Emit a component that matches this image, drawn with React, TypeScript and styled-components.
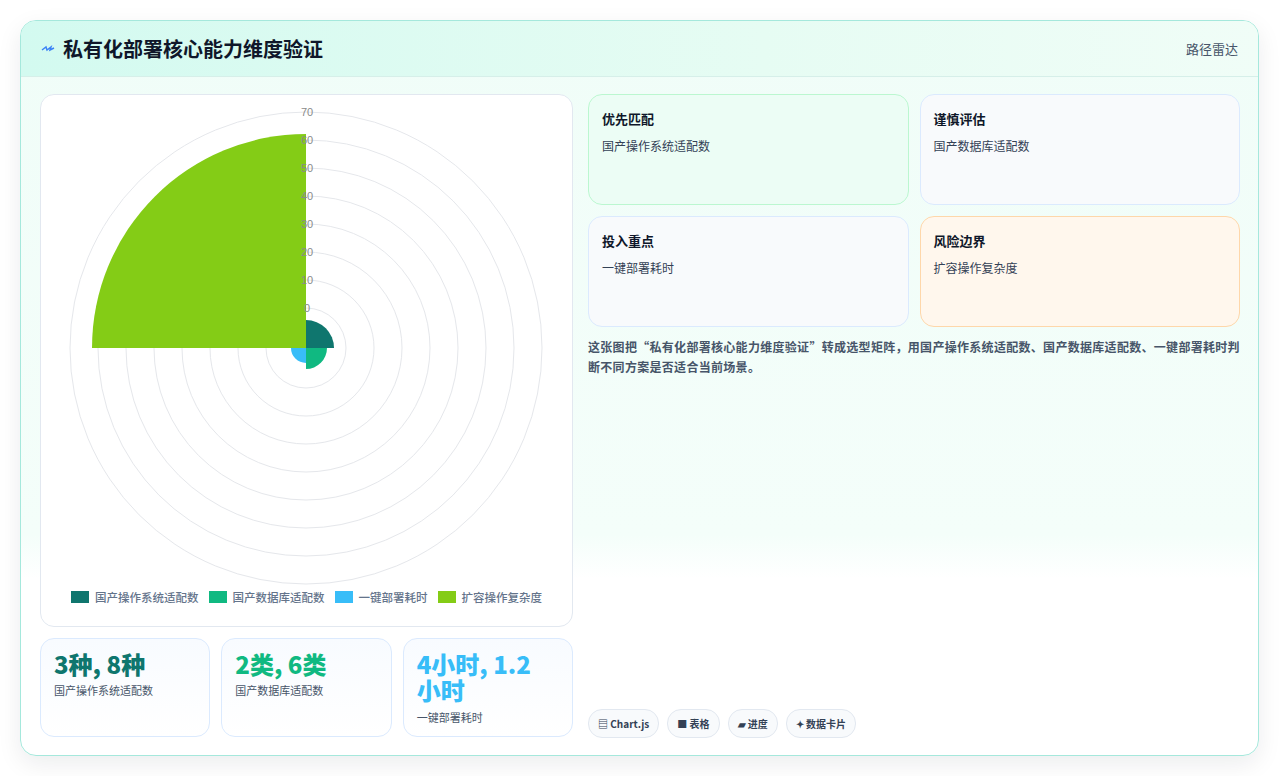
import styled, { createGlobalStyle } from "styled-components";

const Global = createGlobalStyle`
  html, body { margin: 0; padding: 0; background: #ffffff; }
  body { font-family: "Noto Sans CJK SC", "Noto Sans", sans-serif; }
`;

const Page = styled.div`
  width: 1280px;
  height: 776px;
  padding: 20px 21px 22px 20px;
  box-sizing: border-box;
`;

const Card = styled.div`
  height: 100%;
  border: 1px solid #a5e8dc;
  border-radius: 16px;
  overflow: hidden;
  display: flex;
  flex-direction: column;
  background: linear-gradient(180deg, #f0fdf8 0%, #f4fefa 70%, #ffffff 76%);
  box-shadow: 0 8px 24px rgba(15, 23, 42, 0.08);
`;

const Header = styled.div`
  height: 55px;
  flex: none;
  display: flex;
  align-items: center;
  justify-content: space-between;
  padding: 0 20px;
  background: linear-gradient(90deg, #d3faf0 0%, #e6fcf3 60%, #f0fdf7 100%);
  border-bottom: 1px solid #d6efe9;
`;

const Title = styled.h1`
  margin: 0;
  display: flex;
  align-items: center;
  gap: 8px;
  font-size: 20px;
  font-weight: 700;
  color: #0f172a;
`;

const Tag = styled.span`
  font-size: 13px;
  color: #475569;
`;

const Body = styled.div`
  flex: 1;
  display: grid;
  grid-template-columns: 533px 1fr;
  gap: 15px;
  padding: 17px 18px 17px 19px;
  min-height: 0;
`;

const LeftCol = styled.div`
  display: flex;
  flex-direction: column;
  gap: 11px;
`;

const ChartPanel = styled.div`
  height: 533px;
  box-sizing: border-box;
  background: #ffffff;
  border: 1px solid #e2e8f0;
  border-radius: 14px;
  display: flex;
  flex-direction: column;
  align-items: center;
`;

const Legend = styled.div`
  display: flex;
  gap: 10px;
  margin-top: 0;
  font-size: 11.5px;
  font-weight: 500;
  color: #64748b;
`;

const LegendItem = styled.span`
  display: flex;
  align-items: center;
  gap: 6px;
`;

const Swatch = styled.i<{ $c: string }>`
  width: 18px;
  height: 12px;
  background: ${(p) => p.$c};
`;

const Stats = styled.div`
  display: grid;
  grid-template-columns: repeat(3, 1fr);
  gap: 11px;
`;

const Stat = styled.div`
  height: 99px;
  box-sizing: border-box;
  padding: 12px 30px 12px 13px;
  border: 1px solid #dbeafe;
  border-radius: 14px;
  background: linear-gradient(180deg, #f8fbff, #ffffff);
`;

const StatValue = styled.div<{ $c: string }>`
  font-size: 24px;
  font-weight: 800;
  line-height: 1.1;
  color: ${(p) => p.$c};
`;

const StatLabel = styled.div`
  font-size: 11px;
  color: #475569;
  margin-top: 5px;
`;

const RightCol = styled.div`
  display: flex;
  flex-direction: column;
`;

const Grid = styled.div`
  display: grid;
  grid-template-columns: 1fr 1fr;
  gap: 11px;
`;

const Tile = styled.div<{ $bg: string; $bd: string }>`
  height: 111px;
  box-sizing: border-box;
  padding: 14px 13px;
  border-radius: 14px;
  background: ${(p) => p.$bg};
  border: 1px solid ${(p) => p.$bd};
`;

const TileTitle = styled.div`
  font-size: 13px;
  font-weight: 700;
  color: #0f172a;
`;

const TileSub = styled.div`
  font-size: 12px;
  color: #334155;
  margin-top: 9px;
`;

const Note = styled.p`
  margin: 10px 0 0;
  font-size: 12px;
  letter-spacing: 0.3px;
  line-height: 1.65;
  font-weight: 600;
  color: #475569;
`;

const Chips = styled.div`
  margin-top: auto;
  display: flex;
  gap: 8px;
`;

const Chip = styled.span`
  height: 27px;
  padding: 0 9px;
  display: flex;
  align-items: center;
  gap: 3px;
  border-radius: 14px;
  background: #f8fafc;
  border: 1px solid #e2e8f0;
  font-size: 10px;
  font-weight: 700;
  color: #334155;
`;

const colors = ["#0f766e", "#10b981", "#38bdf8", "#84cc16"];
const labels = ["国产操作系统适配数", "国产数据库适配数", "一键部署耗时", "扩容操作复杂度"];
const radii = [28, 21, 15, 214];

function sector(cx: number, cy: number, r: number, i: number) {
  const a0 = (-90 + i * 90) * (Math.PI / 180);
  const a1 = (i * 90) * (Math.PI / 180);
  const x0 = cx + r * Math.cos(a0), y0 = cy + r * Math.sin(a0);
  const x1 = cx + r * Math.cos(a1), y1 = cy + r * Math.sin(a1);
  return `M${cx},${cy} L${x0},${y0} A${r},${r} 0 0 1 ${x1},${y1} Z`;
}

function Polar() {
  const cx = 265, cy = 253;
  const rings = [0, 1, 2, 3, 4, 5, 6, 7].map((k) => 40 + k * 28);
  return (
    <svg width="531" height="494" viewBox="0 0 531 494">
      {rings.map((r) => (
        <circle key={r} cx={cx} cy={cy} r={r} fill="none" stroke="#e5e7eb" strokeWidth="1" />
      ))}
      {radii.map((r, i) => (
        <path key={i} d={sector(cx, cy, r, i)} fill={colors[i]} />
      ))}
      {[0, 10, 20, 30, 40, 50, 60, 70].map((v, k) => (
        <text key={v} x={cx + 1} y={cy - 40 - k * 28 + 4} fontSize="11" fill="#8a8a8a" textAnchor="middle"
          fontFamily="Liberation Sans, sans-serif">{v}</text>
      ))}
    </svg>
  );
}

export default function App() {
  return (
    <Page>
      <Global />
      <Card>
        <Header>
          <Title>
            <svg width="14" height="10" viewBox="0 0 14 10">
              <path d="M1 6 L5 3 L6 6 L10 3 L9 6 L13 4" fill="none" stroke="#3b82f6" strokeWidth="1.4" />
            </svg>
            私有化部署核心能力维度验证
          </Title>
          <Tag>路径雷达</Tag>
        </Header>
        <Body>
          <LeftCol>
            <ChartPanel>
              <Polar />
              <Legend>
                {labels.map((l, i) => (
                  <LegendItem key={l}><Swatch $c={colors[i]} />{l}</LegendItem>
                ))}
              </Legend>
            </ChartPanel>
            <Stats>
              <Stat><StatValue $c="#0f766e">3种, 8种</StatValue><StatLabel>国产操作系统适配数</StatLabel></Stat>
              <Stat><StatValue $c="#10b981">2类, 6类</StatValue><StatLabel>国产数据库适配数</StatLabel></Stat>
              <Stat><StatValue $c="#38bdf8">4小时, 1.2 小时</StatValue><StatLabel>一键部署耗时</StatLabel></Stat>
            </Stats>
          </LeftCol>
          <RightCol>
            <Grid>
              <Tile $bg="#ecfdf5" $bd="#bbf7d0"><TileTitle>优先匹配</TileTitle><TileSub>国产操作系统适配数</TileSub></Tile>
              <Tile $bg="#f8fafc" $bd="#dbeafe"><TileTitle>谨慎评估</TileTitle><TileSub>国产数据库适配数</TileSub></Tile>
              <Tile $bg="#f8fafc" $bd="#dbeafe"><TileTitle>投入重点</TileTitle><TileSub>一键部署耗时</TileSub></Tile>
              <Tile $bg="#fff7ed" $bd="#fed7aa"><TileTitle>风险边界</TileTitle><TileSub>扩容操作复杂度</TileSub></Tile>
            </Grid>
            <Note>
              这张图把“私有化部署核心能力维度验证”转成选型矩阵，用国产操作系统适配数、国产数据库适配数、一键部署耗时判断不同方案是否适合当前场景。
            </Note>
            <Chips>
              <Chip>▤ Chart.js</Chip>
              <Chip>■ 表格</Chip>
              <Chip>▰ 进度</Chip>
              <Chip>✦ 数据卡片</Chip>
            </Chips>
          </RightCol>
        </Body>
      </Card>
    </Page>
  );
}
